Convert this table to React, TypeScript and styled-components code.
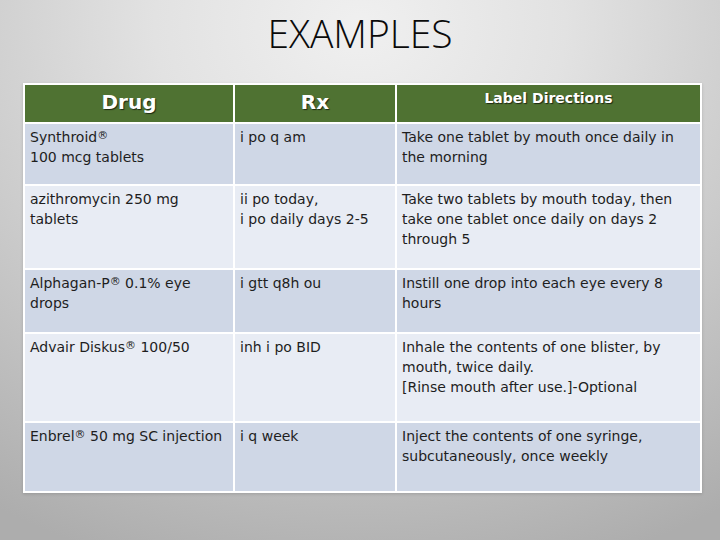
import React, { FC } from "react";
import styled, { createGlobalStyle } from "styled-components";

const GlobalStyle = createGlobalStyle`
  html, body {
    margin: 0;
    padding: 0;
  }
  body {
    width: 720px;
    height: 540px;
    overflow: hidden;
  }
`;

const Slide = styled.div`
  width: 720px;
  height: 540px;
  box-sizing: border-box;
  padding-top: 7px;
  background: radial-gradient(
    ellipse 95% 105% at 50% 5%,
    #f0f0f0 0%,
    #e2e2e2 30%,
    #c8c8c8 65%,
    #adadad 100%
  );
`;

const Title = styled.h1`
  margin: 0;
  text-align: center;
  font-family: "Open Sans", "Liberation Sans", sans-serif;
  font-weight: 300;
  font-size: 39px;
  line-height: 52px;
  color: #0a0a0a;
`;

const Table = styled.div`
  margin: 24px 0 0 23px;
  width: 679px;
  box-sizing: border-box;
  display: grid;
  grid-template-columns: 208px 160px 303px;
  grid-template-rows: 37px 60px 82px 62px 87px 68px;
  gap: 2px;
  padding: 2px;
  background: #ffffff;
  box-shadow: 0 1px 3px rgba(0, 0, 0, 0.15);
`;

const HeadCell = styled.div<{ $size: number }>`
  background: #4f7232;
  color: #ffffff;
  text-align: center;
  padding-top: ${(p) => (p.$size > 16 ? 5 : 4)}px;
  font-family: "DejaVu Sans", Verdana, sans-serif;
  font-weight: 700;
  font-size: ${(p) => p.$size}px;
  line-height: ${(p) => p.$size + 4}px;
  text-shadow: 1px 1px 1px rgba(0, 0, 0, 0.65);
`;

const Cell = styled.div<{ $alt: boolean }>`
  background: ${(p) => (p.$alt ? "#e8ecf4" : "#cfd7e6")};
  padding: 3px 6px 0 5px;
  font-family: "DejaVu Sans", Verdana, sans-serif;
  font-size: 14px;
  line-height: 20px;
  color: #1e1e1e;
`;

const Reg = styled.span`
  font-size: 11px;
  vertical-align: 3px;
  line-height: 0;
`;

type Row = [React.ReactNode, React.ReactNode, React.ReactNode];

const rows: Row[] = [
  [
    <>
      Synthroid<Reg>®</Reg>
      <br />
      100 mcg tablets
    </>,
    "i po q am",
    <>
      Take one tablet by mouth once daily in
      <br />
      the morning
    </>,
  ],
  [
    <>
      azithromycin 250 mg
      <br />
      tablets
    </>,
    <>
      ii po today,
      <br />i po daily days 2-5
    </>,
    <>
      Take two tablets by mouth today, then
      <br />
      take one tablet once daily on days 2
      <br />
      through 5
    </>,
  ],
  [
    <>
      Alphagan-P<Reg>®</Reg> 0.1% eye
      <br />
      drops
    </>,
    "i gtt q8h ou",
    <>
      Instill one drop into each eye every 8
      <br />
      hours
    </>,
  ],
  [
    <>
      Advair Diskus<Reg>®</Reg> 100/50
    </>,
    "inh i po BID",
    <>
      Inhale the contents of one blister, by
      <br />
      mouth, twice daily.
      <br />
      [Rinse mouth after use.]-Optional
    </>,
  ],
  [
    <>
      Enbrel<Reg>®</Reg> 50 mg SC injection
    </>,
    "i q week",
    <>
      Inject the contents of one syringe,
      <br />
      subcutaneously, once weekly
    </>,
  ],
];

const App: FC = () => {
  return (
    <>
      <GlobalStyle />
      <Slide>
        <Title>EXAMPLES</Title>
        <Table>
          <HeadCell $size={20}>Drug</HeadCell>
          <HeadCell $size={20}>Rx</HeadCell>
          <HeadCell $size={14}>Label Directions</HeadCell>
          {rows.map((row, i) =>
            row.map((content, j) => (
              <Cell key={`${i}-${j}`} $alt={i % 2 === 1}>
                {content}
              </Cell>
            ))
          )}
        </Table>
      </Slide>
    </>
  );
};

export default App;
